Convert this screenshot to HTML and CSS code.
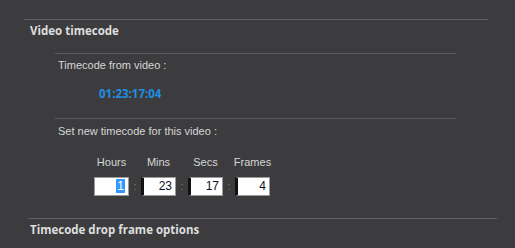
FILE: index.html
```html
<!DOCTYPE html>
<html lang="en">

<head>
    <meta charset="UTF-8">
    <meta name="viewport" content="width=device-width, initial-scale=1.0">
    <title>Video timecode</title>
    <link rel="stylesheet" href="styles.css">
</head>

<body>
    <div class="panel">
        <div class="group">
            <div class="group-title">Video timecode</div>

            <div class="sub">
                <div class="sub-label">Timecode from video :</div>
                <div class="tc-value">01:23:17:04</div>
            </div>

            <div class="sub">
                <div class="sub-label">Set new timecode for this video :</div>
                <div class="tc-grid">
                    <span class="tc-label c1">Hours</span>
                    <span class="tc-label c3">Mins</span>
                    <span class="tc-label c5">Secs</span>
                    <span class="tc-label c7">Frames</span>

                    <div class="field"><span class="selected">1</span></div>
                    <span class="colon">:</span>
                    <div class="field dim">23</div>
                    <span class="colon">:</span>
                    <div class="field dim">17</div>
                    <span class="colon">:</span>
                    <div class="field dim">4</div>
                </div>
            </div>
        </div>

        <div class="group second">
            <div class="group-title">Timecode drop frame options</div>
        </div>
    </div>
</body>

</html>
```

FILE: styles.css
```css
body {
    margin: 0;
    padding: 0;
    background-color: #3c3c3e;
    font-family: "Liberation Sans", Arial, sans-serif;
    font-size: 11px;
    color: #d6d6d6;
}

.panel {
    padding-top: 19px;
}

.group {
    margin-left: 24px;
    width: 464px;
    border-top: 1px solid #616161;
}

.group.second {
    margin-left: 28px;
    width: 469px;
    margin-top: 22px;
}

.group-title {
    padding: 4px 0 0 6px;
    line-height: 14px;
    font-family: "Open Sans", sans-serif;
    font-weight: bold;
    font-size: 11.5px;
    color: #dedede;
}

.group.second .group-title {
    padding-left: 2px;
}

.sub {
    margin-left: 31px;
    width: 401px;
    margin-top: 15px;
    border-top: 1px solid #5c5c5c;
}

.sub + .sub {
    margin-top: 17px;
}

.sub-label {
    padding: 4px 0 0 3px;
    line-height: 14px;
}

.sub + .sub .sub-label {
    padding-top: 5px;
}

.tc-value {
    margin: 15px 0 0 44px;
    line-height: 14px;
    font-family: "Open Sans", sans-serif;
    font-weight: bold;
    font-size: 11.5px;
    color: #1e8fe2;
}

.tc-grid {
    display: grid;
    grid-template-columns: 35px 12px 35px 12px 35px 12px 35px;
    grid-template-rows: 14px 19px;
    row-gap: 8px;
    margin: 17px 0 0 39px;
}

.tc-label {
    justify-self: center;
    white-space: nowrap;
    line-height: 14px;
    grid-row: 1;
}

.c1 { grid-column: 1; }
.c3 { grid-column: 3; }
.c5 { grid-column: 5; }
.c7 { grid-column: 7; }

.field {
    grid-row: 2;
    box-sizing: border-box;
    height: 19px;
    background-color: #ffffff;
    border: 1px solid #9a9a9a;
    text-align: right;
    padding-right: 3px;
    line-height: 17px;
    font-size: 12px;
    color: #101020;
}

.field.dim {
    border-left: 3px solid #111111;
}

.selected {
    background-color: #3399ff;
    color: #ffffff;
    padding: 0 1px;
}

.colon {
    grid-row: 2;
    text-align: center;
    line-height: 19px;
    color: #7a7a7a;
}
```
